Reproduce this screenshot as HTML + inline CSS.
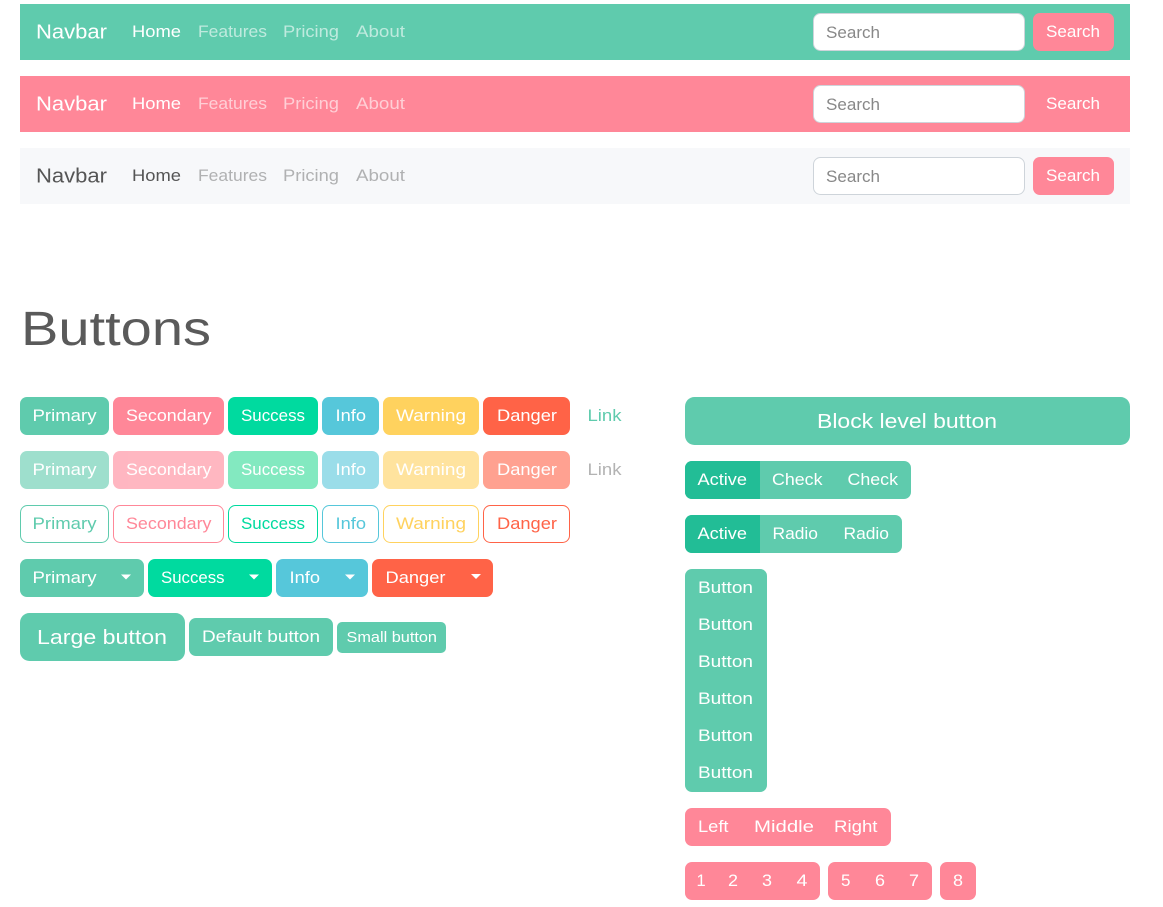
<!DOCTYPE html>
<html lang="en">
<head>
<meta charset="utf-8">
<title>Buttons</title>
<style>
html,body{margin:0;padding:0;background:#fff;width:1163px;height:907px;overflow:hidden}
svg{display:block}
text{font-family:"Liberation Sans",sans-serif;font-size:16.5px;fill:#fff}
.b{font-size:20.500px}
.s{font-size:14.500px}
.dim{fill:#fff;fill-opacity:.6}
.ph{fill:#888}
.p{fill:#5fcbad}.c{fill:#ff8798}.u{fill:#00da9f}.i{fill:#56c7da}.w{fill:#ffd25e}.d{fill:#ff6347}
.o{fill:#fff}
</style>
</head>
<body>
<svg width="1163" height="907" viewBox="0 0 1163 907" xmlns="http://www.w3.org/2000/svg">
<!-- navbar 1 -->
<rect x="20" y="4" width="1110" height="56" class="p"/>
<text class="b" x="36" y="38.500" textLength="71" lengthAdjust="spacingAndGlyphs">Navbar</text>
<text x="132" y="37" textLength="49" lengthAdjust="spacingAndGlyphs">Home</text>
<text class="dim" x="198" y="37" textLength="69" lengthAdjust="spacingAndGlyphs">Features</text>
<text class="dim" x="283" y="37" textLength="56" lengthAdjust="spacingAndGlyphs">Pricing</text>
<text class="dim" x="356" y="37" textLength="49" lengthAdjust="spacingAndGlyphs">About</text>
<rect x="813.500" y="13.500" width="211" height="37" rx="7" fill="#fff" stroke="#ced4da"/>
<text class="ph" x="826" y="38" textLength="54" lengthAdjust="spacingAndGlyphs">Search</text>
<rect x="1033" y="13" width="81" height="38" rx="7" class="c"/>
<text x="1046" y="37" textLength="54" lengthAdjust="spacingAndGlyphs">Search</text>
<!-- navbar 2 -->
<rect x="20" y="76" width="1110" height="56" class="c"/>
<text class="b" x="36" y="110.500" textLength="71" lengthAdjust="spacingAndGlyphs">Navbar</text>
<text x="132" y="109" textLength="49" lengthAdjust="spacingAndGlyphs">Home</text>
<text class="dim" x="198" y="109" textLength="69" lengthAdjust="spacingAndGlyphs">Features</text>
<text class="dim" x="283" y="109" textLength="56" lengthAdjust="spacingAndGlyphs">Pricing</text>
<text class="dim" x="356" y="109" textLength="49" lengthAdjust="spacingAndGlyphs">About</text>
<rect x="813.500" y="85.500" width="211" height="37" rx="7" fill="#fff" stroke="#ced4da"/>
<text class="ph" x="826" y="110" textLength="54" lengthAdjust="spacingAndGlyphs">Search</text>
<text x="1046" y="109" textLength="54" lengthAdjust="spacingAndGlyphs">Search</text>
<!-- navbar 3 -->
<rect x="20" y="148" width="1110" height="56" fill="#f7f8fa"/>
<text class="b" x="36" y="182.500" textLength="71" lengthAdjust="spacingAndGlyphs" style="fill:#555">Navbar</text>
<text x="132" y="181" textLength="49" lengthAdjust="spacingAndGlyphs" style="fill:#555">Home</text>
<text x="198" y="181" textLength="69" lengthAdjust="spacingAndGlyphs" style="fill:#b0b1b2">Features</text>
<text x="283" y="181" textLength="56" lengthAdjust="spacingAndGlyphs" style="fill:#b0b1b2">Pricing</text>
<text x="356" y="181" textLength="49" lengthAdjust="spacingAndGlyphs" style="fill:#b0b1b2">About</text>
<rect x="813.500" y="157.500" width="211" height="37" rx="7" fill="#fff" stroke="#ced4da"/>
<text class="ph" x="826" y="182" textLength="54" lengthAdjust="spacingAndGlyphs">Search</text>
<rect x="1033" y="157" width="81" height="38" rx="7" class="c"/>
<text x="1046" y="181" textLength="54" lengthAdjust="spacingAndGlyphs">Search</text>
<!-- heading -->
<text x="21" y="345" textLength="190" lengthAdjust="spacingAndGlyphs" style="font-size:48px;fill:#5a5a5a">Buttons</text>
<!-- row 1 -->
<rect x="20" y="397" width="89" height="38" rx="7" class="p"/>
<text x="32.500" y="421" textLength="64" lengthAdjust="spacingAndGlyphs">Primary</text>
<rect x="113" y="397" width="111" height="38" rx="7" class="c"/>
<text x="126" y="421" textLength="85.500" lengthAdjust="spacingAndGlyphs">Secondary</text>
<rect x="228" y="397" width="90" height="38" rx="7" class="u"/>
<text x="241" y="421" textLength="64" lengthAdjust="spacingAndGlyphs">Success</text>
<rect x="322" y="397" width="57" height="38" rx="7" class="i"/>
<text x="335.500" y="421" textLength="30.500" lengthAdjust="spacingAndGlyphs">Info</text>
<rect x="383" y="397" width="96" height="38" rx="7" class="w"/>
<text x="396" y="421" textLength="70" lengthAdjust="spacingAndGlyphs">Warning</text>
<rect x="483" y="397" width="87" height="38" rx="7" class="d"/>
<text x="497" y="421" textLength="60" lengthAdjust="spacingAndGlyphs">Danger</text>
<text x="587.500" y="421" textLength="34" lengthAdjust="spacingAndGlyphs" class="p">Link</text>
<!-- row 2 -->
<g opacity=".6">
<rect x="20" y="451" width="89" height="38" rx="7" class="p"/>
<rect x="113" y="451" width="111" height="38" rx="7" class="c"/>
<rect x="322" y="451" width="57" height="38" rx="7" class="i"/>
<rect x="383" y="451" width="96" height="38" rx="7" class="w"/>
<rect x="483" y="451" width="87" height="38" rx="7" class="d"/>
</g>
<rect x="228" y="451" width="90" height="38" rx="7" fill="#83e9c0"/>
<text x="32.500" y="475" textLength="64" lengthAdjust="spacingAndGlyphs">Primary</text>
<text x="126" y="475" textLength="85.500" lengthAdjust="spacingAndGlyphs">Secondary</text>
<text x="241" y="475" textLength="64" lengthAdjust="spacingAndGlyphs">Success</text>
<text x="335.500" y="475" textLength="30.500" lengthAdjust="spacingAndGlyphs">Info</text>
<text x="396" y="475" textLength="70" lengthAdjust="spacingAndGlyphs">Warning</text>
<text x="497" y="475" textLength="60" lengthAdjust="spacingAndGlyphs">Danger</text>
<text x="587.500" y="475" textLength="34" lengthAdjust="spacingAndGlyphs" style="fill:#b3b3b3">Link</text>
<!-- row 3 -->
<rect x="20.500" y="505.500" width="88" height="37" rx="7" fill="#fff" stroke="#5fcbad"/>
<text x="32.500" y="529" textLength="64" lengthAdjust="spacingAndGlyphs" class="p">Primary</text>
<rect x="113.500" y="505.500" width="110" height="37" rx="7" fill="#fff" stroke="#ff8798"/>
<text x="126" y="529" textLength="85.500" lengthAdjust="spacingAndGlyphs" class="c">Secondary</text>
<rect x="228.500" y="505.500" width="89" height="37" rx="7" fill="#fff" stroke="#00da9f"/>
<text x="241" y="529" textLength="64" lengthAdjust="spacingAndGlyphs" class="u">Success</text>
<rect x="322.500" y="505.500" width="56" height="37" rx="7" fill="#fff" stroke="#56c7da"/>
<text x="335.500" y="529" textLength="30.500" lengthAdjust="spacingAndGlyphs" class="i">Info</text>
<rect x="383.500" y="505.500" width="95" height="37" rx="7" fill="#fff" stroke="#ffd25e"/>
<text x="396" y="529" textLength="70" lengthAdjust="spacingAndGlyphs" class="w">Warning</text>
<rect x="483.500" y="505.500" width="86" height="37" rx="7" fill="#fff" stroke="#ff6347"/>
<text x="497" y="529" textLength="60" lengthAdjust="spacingAndGlyphs" class="d">Danger</text>
<!-- row 4 -->
<rect x="20" y="559" width="124" height="38" rx="7" class="p"/>
<text x="32.500" y="583" textLength="64" lengthAdjust="spacingAndGlyphs">Primary</text>
<path d="M121 574.500h10l-5 5z" fill="#fff"/>
<rect x="148" y="559" width="124" height="38" rx="7" class="u"/>
<text x="161" y="583" textLength="63.500" lengthAdjust="spacingAndGlyphs">Success</text>
<path d="M249 574.500h10l-5 5z" fill="#fff"/>
<rect x="276" y="559" width="92" height="38" rx="7" class="i"/>
<text x="289.500" y="583" textLength="30.500" lengthAdjust="spacingAndGlyphs">Info</text>
<path d="M345 574.500h10l-5 5z" fill="#fff"/>
<rect x="372" y="559" width="121" height="38" rx="7" class="d"/>
<text x="385.500" y="583" textLength="60" lengthAdjust="spacingAndGlyphs">Danger</text>
<path d="M471 574h10l-5 5z" fill="#fff"/>
<!-- row 5 -->
<rect x="20" y="613" width="165" height="48" rx="9.500" class="p"/>
<text class="b" x="37" y="644" textLength="130" lengthAdjust="spacingAndGlyphs">Large button</text>
<rect x="189" y="618" width="144" height="38" rx="7" class="p"/>
<text x="202" y="642" textLength="118" lengthAdjust="spacingAndGlyphs">Default button</text>
<rect x="337" y="622" width="109" height="31" rx="5" class="p"/>
<text class="s" x="346.500" y="642" textLength="90.500" lengthAdjust="spacingAndGlyphs">Small button</text>
<!-- block -->
<rect x="685" y="397" width="445" height="48" rx="9.500" class="p"/>
<text class="b" x="817" y="428" textLength="180" lengthAdjust="spacingAndGlyphs">Block level button</text>
<!-- check group -->
<rect x="685" y="461" width="226" height="38" rx="7" class="p"/>
<path d="M692 461H760V499H692a7 7 0 0 1-7-7V468a7 7 0 0 1 7-7z" fill="#22bd96"/>
<text x="697.500" y="485" textLength="49.500" lengthAdjust="spacingAndGlyphs">Active</text>
<text x="772" y="485" textLength="50.500" lengthAdjust="spacingAndGlyphs">Check</text>
<text x="847.500" y="485" textLength="50.500" lengthAdjust="spacingAndGlyphs">Check</text>
<!-- radio group -->
<rect x="685" y="515" width="217" height="38" rx="7" class="p"/>
<path d="M692 515H760V553H692a7 7 0 0 1-7-7V522a7 7 0 0 1 7-7z" fill="#22bd96"/>
<text x="697.500" y="539" textLength="49.500" lengthAdjust="spacingAndGlyphs">Active</text>
<text x="772.500" y="539" textLength="45.500" lengthAdjust="spacingAndGlyphs">Radio</text>
<text x="843.500" y="539" textLength="45.500" lengthAdjust="spacingAndGlyphs">Radio</text>
<!-- vertical group -->
<rect x="685" y="569" width="82" height="223" rx="7" class="p"/>
<text x="698" y="593" textLength="55" lengthAdjust="spacingAndGlyphs">Button</text>
<text x="698" y="630" textLength="55" lengthAdjust="spacingAndGlyphs">Button</text>
<text x="698" y="667" textLength="55" lengthAdjust="spacingAndGlyphs">Button</text>
<text x="698" y="704" textLength="55" lengthAdjust="spacingAndGlyphs">Button</text>
<text x="698" y="741" textLength="55" lengthAdjust="spacingAndGlyphs">Button</text>
<text x="698" y="778" textLength="55" lengthAdjust="spacingAndGlyphs">Button</text>
<!-- left middle right -->
<rect x="685" y="808" width="206" height="38" rx="7" class="c"/>
<text x="698" y="832" textLength="30.500" lengthAdjust="spacingAndGlyphs">Left</text>
<text x="754" y="832" textLength="60" lengthAdjust="spacingAndGlyphs">Middle</text>
<text x="834" y="832" textLength="43.500" lengthAdjust="spacingAndGlyphs">Right</text>
<!-- pagination -->
<rect x="685" y="862" width="135" height="38" rx="7" class="c"/>
<text x="696.500" y="886">1</text>
<text x="728" y="886" textLength="10" lengthAdjust="spacingAndGlyphs">2</text>
<text x="762" y="886" textLength="10" lengthAdjust="spacingAndGlyphs">3</text>
<text x="796.500" y="886" textLength="11" lengthAdjust="spacingAndGlyphs">4</text>
<rect x="828" y="862" width="104" height="38" rx="7" class="c"/>
<text x="841" y="886" textLength="9.500" lengthAdjust="spacingAndGlyphs">5</text>
<text x="875" y="886" textLength="10" lengthAdjust="spacingAndGlyphs">6</text>
<text x="909" y="886" textLength="10" lengthAdjust="spacingAndGlyphs">7</text>
<rect x="940" y="862" width="36" height="38" rx="7" class="c"/>
<text x="953" y="886" textLength="10" lengthAdjust="spacingAndGlyphs">8</text>
</svg>
</body>
</html>
